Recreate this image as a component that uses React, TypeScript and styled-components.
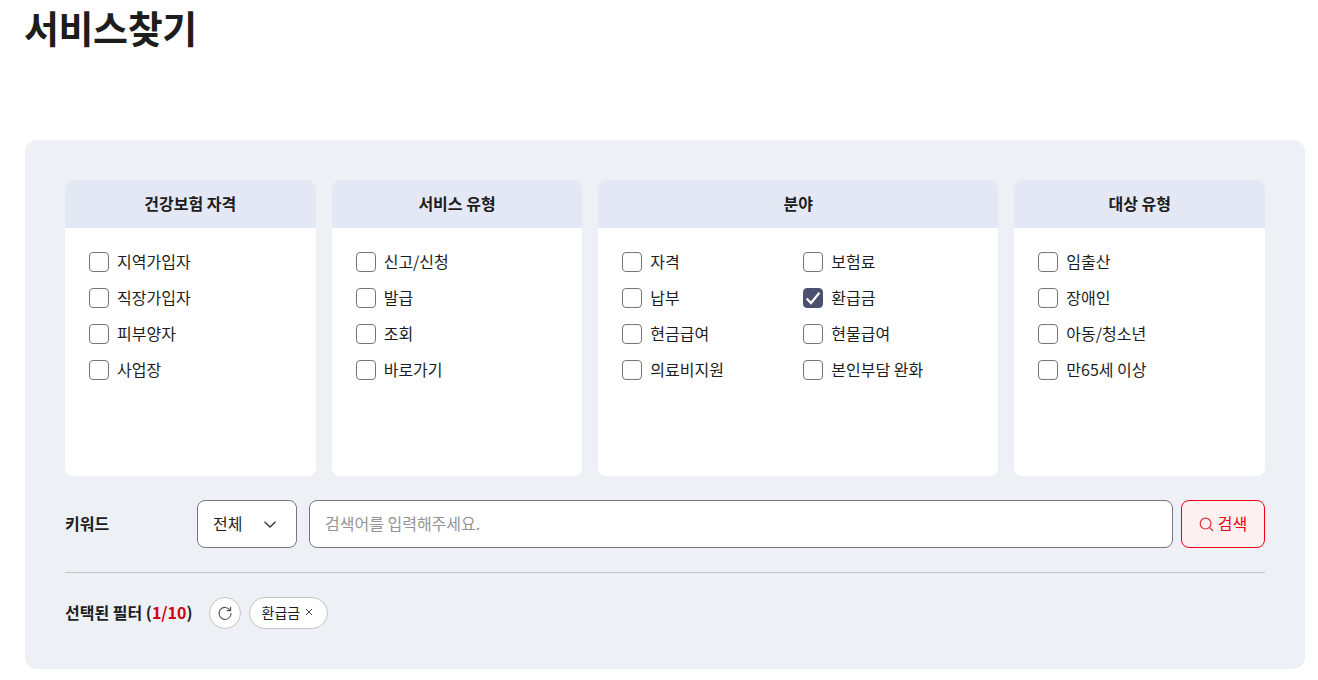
import React from 'react'
import styled, { createGlobalStyle } from 'styled-components'

const groups = [
  { title: '건강보험 자격', columns: 1, items: ['지역가입자', '직장가입자', '피부양자', '사업장'] },
  { title: '서비스 유형', columns: 1, items: ['신고/신청', '발급', '조회', '바로가기'] },
  { title: '분야', columns: 2, items: ['자격', '보험료', '납부', '환급금', '현금급여', '현물급여', '의료비지원', '본인부담 완화'] },
  { title: '대상 유형', columns: 1, items: ['임출산', '장애인', '아동/청소년', '만65세 이상'] },
]

const App = () => {
  return (
    <Page>
      <GlobalStyle />
      <Title>서비스찾기</Title>
      <Panel>
        <Groups>
          {groups.map((group) => (
            <Card key={group.title}>
              <CardHeader>{group.title}</CardHeader>
              <CardBody $columns={group.columns}>
                {group.items.map((item) => (
                  <CheckLabel key={item}>
                    <CheckBox $checked={item === '환급금'}>
                      {item === '환급금' && (
                        <svg width="16" height="16" viewBox="0 0 16 16" fill="none">
                          <path d="M1.6 8.4L6 13L14.4 2.8" stroke="#fff" strokeWidth="2.2" />
                        </svg>
                      )}
                    </CheckBox>
                    <LabelText>{item}</LabelText>
                  </CheckLabel>
                ))}
              </CardBody>
            </Card>
          ))}
        </Groups>

        <SearchRow>
          <RowLabel>키워드</RowLabel>
          <Select>
            <LabelText>전체</LabelText>
            <svg width="12" height="7" viewBox="0 0 12 7" fill="none">
              <path d="M0.5 0.7L6 6L11.5 0.7" stroke="#333" strokeWidth="1.3" />
            </svg>
          </Select>
          <SearchInput placeholder="검색어를 입력해주세요." />
          <SearchButton>
            <svg width="15" height="15" viewBox="0 0 15 15" fill="none">
              <circle cx="6.6" cy="6.6" r="5.4" stroke="#e0313c" strokeWidth="1.2" />
              <path d="M10.4 10.4L14 14" stroke="#e0313c" strokeWidth="1.2" />
            </svg>
            <LabelText>검색</LabelText>
          </SearchButton>
        </SearchRow>

        <Divider />

        <FilterRow>
          <FilterLabel>
            선택된 필터 (<Count>1/10</Count>)
          </FilterLabel>
          <RefreshButton>
            <svg width="16" height="16" viewBox="0 0 16 16" fill="none">
              <path d="M13.2 5.4A6 6 0 1 0 14 8" stroke="#555" strokeWidth="1.1" />
              <path d="M13.6 1.8V5.6H9.8" stroke="#555" strokeWidth="1.1" />
            </svg>
          </RefreshButton>
          <Chip>
            환급금
            <svg width="8" height="8" viewBox="0 0 8 8" fill="none">
              <path d="M1 1L7 7M7 1L1 7" stroke="#444" strokeWidth="1" />
            </svg>
          </Chip>
        </FilterRow>
      </Panel>
    </Page>
  )
}

export default App

const GlobalStyle = createGlobalStyle`
  html, body {
    margin: 0;
    padding: 0;
    background: #fff;
  }
  body, input, button {
    font-family: "Noto Sans CJK KR", "Noto Sans", sans-serif;
  }
`

const Page = styled.div`
  padding: 0 13px 11px 25px;
  color: #1d1d1d;
`

const Title = styled.h1`
  margin: 0 0 86px -1px;
  height: 54px;
  font-size: 38px;
  line-height: 54px;
  font-weight: 700;
  letter-spacing: -0.4px;
  color: #1d1d1d;
`

const Panel = styled.section`
  background: #edf0f5;
  border-radius: 12px;
  padding: 40px;
`

const Groups = styled.div`
  display: grid;
  grid-template-columns: 1fr 1fr 400px 1fr;
  gap: 16px;
`

const Card = styled.div`
  height: 296px;
  background: #fff;
  border-radius: 8px;
  overflow: hidden;
`

const CardHeader = styled.div`
  height: 48px;
  padding-bottom: 3px;
  box-sizing: border-box;
  background: #e4e8f4;
  display: flex;
  align-items: center;
  justify-content: center;
  font-size: 16px;
  font-weight: 700;
  color: #1d1d1d;
`

const CardBody = styled.div<{ $columns: number }>`
  display: grid;
  grid-template-columns: repeat(${({ $columns }) => $columns}, 1fr);
  grid-auto-rows: 20px;
  row-gap: 16px;
  padding: 24px 14px 0 24px;
`

const CheckLabel = styled.label`
  display: flex;
  align-items: center;
  gap: 8px;
  font-size: 16px;
  color: #1d1d1d;
  white-space: nowrap;
`

const LabelText = styled.span`
  line-height: 20px;
  margin-top: -2px;
`

const CheckBox = styled.span<{ $checked?: boolean }>`
  box-sizing: border-box;
  width: 20px;
  height: 20px;
  flex: none;
  display: flex;
  align-items: center;
  justify-content: center;
  border-radius: 4px;
  border: 1px solid ${({ $checked }) => ($checked ? '#4d5170' : '#767676')};
  background: ${({ $checked }) => ($checked ? '#4d5170' : '#fff')};
`

const SearchRow = styled.div`
  display: flex;
  align-items: center;
  margin-top: 24px;
  height: 48px;
`

const RowLabel = styled.div`
  width: 132px;
  flex: none;
  margin-top: -3px;
  font-size: 16px;
  font-weight: 700;
  color: #1d1d1d;
`

const Select = styled.div`
  box-sizing: border-box;
  width: 100px;
  height: 48px;
  flex: none;
  display: flex;
  align-items: center;
  justify-content: space-between;
  padding: 0 20px 0 15px;
  margin-right: 12px;
  background: #fff;
  border: 1px solid #767676;
  border-radius: 8px;
  font-size: 16px;
`

const SearchInput = styled.input`
  box-sizing: border-box;
  flex: 1;
  min-width: 0;
  height: 48px;
  padding: 0 15px 3px;
  background: #fff;
  border: 1px solid #767676;
  border-radius: 8px;
  font-size: 16px;
  outline: none;

  &::placeholder {
    color: #949494;
    opacity: 1;
  }
`

const SearchButton = styled.button`
  box-sizing: border-box;
  width: 84px;
  height: 48px;
  flex: none;
  margin-left: 8px;
  display: flex;
  align-items: center;
  justify-content: center;
  gap: 4px;
  padding: 0;
  background: #fdf0f1;
  border: 1px solid #f00013;
  border-radius: 8px;
  font-size: 16px;
  color: #e60012;
`

const Divider = styled.hr`
  margin: 24px 0 0;
  border: 0;
  height: 1px;
  background: #c4c4c4;
`

const FilterRow = styled.div`
  display: flex;
  align-items: center;
  margin-top: 24px;
  height: 32px;
`

const FilterLabel = styled.div`
  font-size: 16px;
  font-weight: 700;
  color: #1d1d1d;
  margin: -3px 16px 0 0;
  white-space: nowrap;
`

const Count = styled.span`
  color: #d00010;
`

const RefreshButton = styled.button`
  box-sizing: border-box;
  width: 32px;
  height: 32px;
  flex: none;
  display: flex;
  align-items: center;
  justify-content: center;
  padding: 0;
  margin-right: 8px;
  background: #fff;
  border: 1px solid #c4c4c4;
  border-radius: 50%;
`

const Chip = styled.div`
  box-sizing: border-box;
  height: 32px;
  display: flex;
  align-items: center;
  gap: 5px;
  padding: 0 14px 2px 12px;
  background: #fff;
  border: 1px solid #c4c4c4;
  border-radius: 16px;
  font-size: 14px;
  color: #1d1d1d;
`
